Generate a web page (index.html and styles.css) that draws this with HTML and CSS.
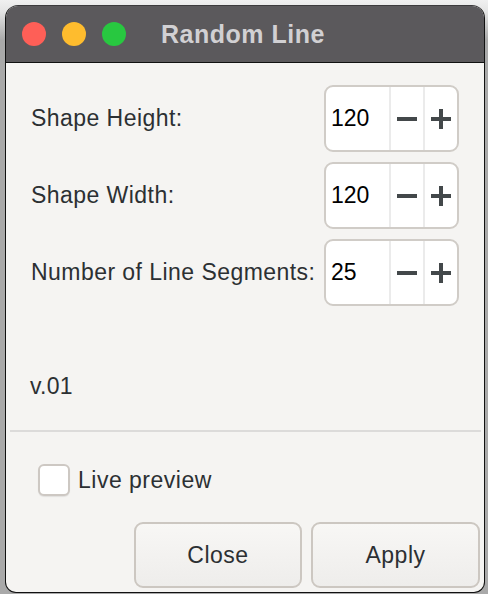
FILE: index.html
```html
<!DOCTYPE html>
<html>
<head>
<meta charset="utf-8">
<link rel="stylesheet" href="styles.css">
</head>
<body>
<div class="window">
  <div class="titlebar">
    <div class="lights">
      <span class="light red"></span>
      <span class="light yellow"></span>
      <span class="light green"></span>
    </div>
    <div class="title">Random Line</div>
  </div>
  <div class="content">
    <div class="fields">
      <div class="label">Shape Height:</div>
      <div class="spin">
        <div class="value">120</div>
        <div class="step"><svg width="20" height="20" viewBox="0 0 20 20"><rect x="0" y="8" width="20" height="4" fill="#43484a"/></svg></div>
        <div class="step"><svg width="20" height="20" viewBox="0 0 20 20"><rect x="0" y="8" width="20" height="4" fill="#43484a"/><rect x="8" y="0" width="4" height="20" fill="#43484a"/></svg></div>
      </div>
      <div class="label">Shape Width:</div>
      <div class="spin">
        <div class="value">120</div>
        <div class="step"><svg width="20" height="20" viewBox="0 0 20 20"><rect x="0" y="8" width="20" height="4" fill="#43484a"/></svg></div>
        <div class="step"><svg width="20" height="20" viewBox="0 0 20 20"><rect x="0" y="8" width="20" height="4" fill="#43484a"/><rect x="8" y="0" width="4" height="20" fill="#43484a"/></svg></div>
      </div>
      <div class="label">Number of Line Segments:</div>
      <div class="spin">
        <div class="value">25</div>
        <div class="step"><svg width="20" height="20" viewBox="0 0 20 20"><rect x="0" y="8" width="20" height="4" fill="#43484a"/></svg></div>
        <div class="step"><svg width="20" height="20" viewBox="0 0 20 20"><rect x="0" y="8" width="20" height="4" fill="#43484a"/><rect x="8" y="0" width="4" height="20" fill="#43484a"/></svg></div>
      </div>
    </div>
    <div class="version">v.01</div>
    <div class="separator"></div>
    <label class="check">
      <span class="box"></span>
      <span class="check-label">Live preview</span>
    </label>
    <div class="buttons">
      <button class="btn close">Close</button>
      <button class="btn apply">Apply</button>
    </div>
  </div>
</div>
</body>
</html>
```

FILE: styles.css
```css
html, body {
  margin: 0;
  padding: 0;
}
body {
  width: 488px;
  height: 594px;
  overflow: hidden;
  background: linear-gradient(#f0f0f0 0, #e4e4e4 12px, #a9a9a9 40px, #a9a9a9 100%);
  font-family: "Liberation Sans", Arial, sans-serif;
  color: #2c3033;
}
.window {
  margin: 5px 0 0 5px;
  width: 480px;
  height: 588px;
  box-sizing: border-box;
  border: 1px solid #111;
  border-top-color: #3c3b3d;
  border-radius: 13px 13px 11px 11px;
  overflow: hidden;
  background: #f5f4f2;
  display: flex;
  flex-direction: column;
}
.titlebar {
  height: 56px;
  flex: none;
  background: #5b595c;
  border-bottom: 1px solid #111;
  display: flex;
  align-items: center;
  padding-left: 16px;
}
.lights {
  display: flex;
  gap: 16px;
}
.light {
  width: 24px;
  height: 24px;
  border-radius: 50%;
  display: block;
}
.red { background: #fe5f57; }
.yellow { background: #febc2e; }
.green { background: #28c840; }
.title {
  margin-left: 35px;
  color: #d1d0d3;
  font-weight: bold;
  font-size: 25px;
  letter-spacing: 0.5px;
}
.content {
  flex: 1;
  display: flex;
  flex-direction: column;
  padding-top: 22px;
}
.fields {
  display: grid;
  grid-template-columns: 293px 135px;
  grid-auto-rows: 67px;
  row-gap: 10px;
  padding-left: 25px;
  align-items: center;
}
.label {
  font-size: 23px;
  letter-spacing: 0.45px;
}
.spin {
  height: 67px;
  box-sizing: border-box;
  border: 2px solid #d0ccc7;
  border-radius: 9px;
  background: #fff;
  display: grid;
  grid-template-columns: 1fr 34px 34px;
}
.value {
  display: flex;
  align-items: center;
  padding-left: 5px;
  font-size: 23px;
  color: #000;
}
.step {
  border-left: 2px solid #ebebeb;
  display: flex;
  align-items: center;
  justify-content: center;
}
.version {
  margin-top: 68px;
  padding-left: 24px;
  font-size: 23px;
  letter-spacing: 0.3px;
  line-height: 24px;
}
.separator {
  margin: 32px 3px 0 4px;
  height: 2px;
  background: #dcdbda;
}
.check {
  margin-top: 32px;
  margin-left: 32px;
  display: flex;
  align-items: center;
  gap: 8px;
}
.box {
  width: 32px;
  height: 32px;
  box-sizing: border-box;
  border: 2px solid #cdc8c3;
  border-radius: 6px;
  background: #fff;
  box-shadow: 0 1px 1px rgba(0,0,0,0.08);
}
.check-label {
  font-size: 23px;
  letter-spacing: 0.5px;
}
.buttons {
  margin-top: 26px;
  display: flex;
  justify-content: flex-end;
  gap: 9px;
  padding-right: 4px;
}
.btn {
  height: 66px;
  box-sizing: border-box;
  border: 2px solid #ccc7c1;
  border-radius: 9px;
  background: linear-gradient(#f8f7f5, #eeedeb);
  font-family: "Liberation Sans", Arial, sans-serif;
  font-size: 23px;
  letter-spacing: 0.5px;
  color: #2c3033;
  padding: 0;
}
.close { width: 168px; }
.apply { width: 169px; }
```
